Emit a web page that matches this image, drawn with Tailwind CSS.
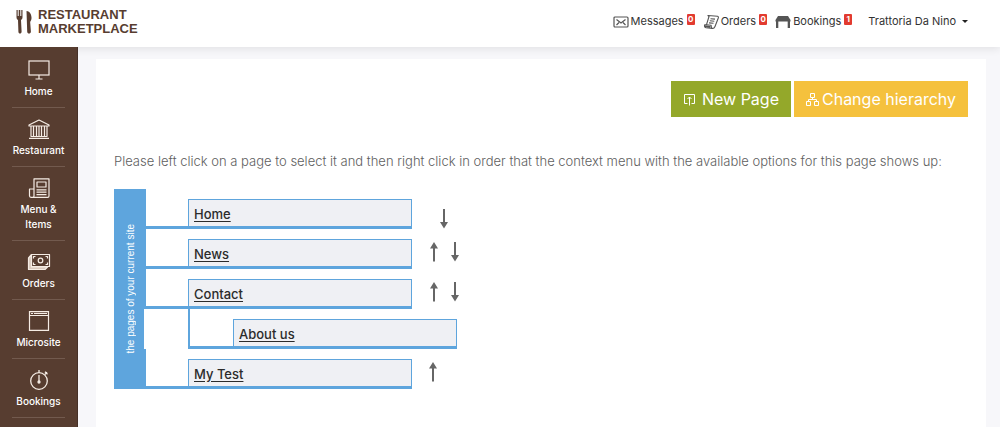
<!DOCTYPE html>
<html lang="en">
<head>
    <meta charset="UTF-8">
    <meta name="viewport" content="width=device-width, initial-scale=1.0">
    <title>Restaurant Marketplace</title>
    <script src="https://cdn.jsdelivr.net/npm/@tailwindcss/browser@4"></script>
</head>
<body class="min-h-screen flex flex-col bg-[#f7f7fa] font-['Inter',sans-serif] text-[#333]">

    <!-- Header -->
    <header class="relative h-[47px] shrink-0 bg-white flex items-center justify-between pl-4 pr-8 pb-1 shadow-[0_2px_8px_rgba(0,0,0,0.09)]">
        <a href="#" class="flex items-center gap-[6px] text-[#573d30]">
            <svg class="w-4 h-6" viewBox="0 0 16 24" fill="currentColor">
                <path d="M.5 0h1.200v6h1V0h1.600v6h1V0h1.200v7c0 1.800-.7 2.600-1.500 3l.6 11.500c0 2.800-3.200 2.800-3.200 0L2 10C1 9.500.5 8.500.5 7z"/>
                <path d="M10.500 1c4 .5 5.200 4.500 5 7.500-.1 2-1.400 2.800-1.300 4l.7 9c0 2.800-3.700 2.800-3.700 0z"/>
            </svg>
            <span class="font-['Liberation_Sans',sans-serif] font-bold text-[13px] leading-[14px]">RESTAURANT<br>MARKETPLACE</span>
        </a>
        <nav class="flex items-center text-[11px]">
            <a href="#" class="flex items-center">
                <svg class="w-4 h-3 mr-[2px]" viewBox="0 0 16 12" fill="none" stroke="#555" stroke-width="1.2">
                    <rect x="1" y="1" width="14" height="10" rx="1"/>
                    <path d="M3.500 3.500L8 7l4.500-3.500M3.500 9L6 6.500M12.500 9L10 6.500"/>
                </svg>
                Messages
                <span class="ml-[3px] mb-1 w-2 h-[11px] bg-[#e23b30] rounded-[1px] text-white text-[8px] leading-[11px] font-bold text-center">0</span>
            </a>
            <a href="#" class="flex items-center ml-2">
                <svg class="w-4 h-4 mr-[2px]" viewBox="0 0 16 16" fill="none" stroke="#555" stroke-width="1.1" stroke-linejoin="round">
                    <path d="M6 2.500L5 1.500l9.500.7c1.200.2 1 1.300.7 2.100L12 12.500c-.6 1.500-1.500 2.200-2.700 2L3 13.800c-1.600-.4-1.700-2-1.300-3.100H3.500z"/>
                    <path d="M3.500 10.700l4.600.6c0 1.400.2 2.600 1.200 3.200M7.500 4.700l4.500.4M6.800 6.800l4.500.4M6 8.900l4.500.4"/>
                    <path d="M2 12.300l5.500.8" stroke-width="2"/>
                </svg>
                Orders
                <span class="ml-[3px] mb-1 w-2 h-[11px] bg-[#e23b30] rounded-[1px] text-white text-[8px] leading-[11px] font-bold text-center">0</span>
            </a>
            <a href="#" class="flex items-center ml-2">
                <svg class="w-4 h-3 mr-[2px]" viewBox="0 0 16 12" fill="#555">
                    <path d="M3 0h10l2.500 4v1.500H.5V4z"/>
                    <path d="M1 5h2.300v7H1zM12.700 5H15v7h-2.300z"/>
                </svg>
                Bookings
                <span class="ml-[3px] mb-1 w-2 h-[11px] bg-[#e23b30] rounded-[1px] text-white text-[8px] leading-[11px] font-bold text-center">1</span>
            </a>
            <button type="button" class="flex items-center ml-4 gap-[6px]">
                Trattoria Da Nino
                <svg class="w-[6px] h-[3px]" viewBox="0 0 6 3" fill="#222"><path d="M0 0h6L3 3z"/></svg>
            </button>
        </nav>
    </header>

    <div class="flex flex-1">

        <!-- Sidebar -->
        <aside class="relative w-[78px] shrink-0 bg-[#573d30] border-r border-[#453027] px-3 pt-[2px] text-white">
            <nav class="text-[10px] leading-[15px] font-medium text-center">
                <a href="#" class="flex flex-col items-center gap-1 pt-[11px] pb-2 border-b border-[#725a4e]">
                    <svg class="w-6 h-5" viewBox="0 0 24 20" fill="none" stroke="#f5ece4" stroke-width="1.200">
                        <rect x="2" y="1" width="20" height="14"/>
                        <path d="M12 15v4M8.500 19h7"/>
                    </svg>
                    Home
                </a>
                <a href="#" class="flex flex-col items-center gap-1 pt-[11px] pb-2 border-b border-[#725a4e]">
                    <svg class="w-6 h-5" viewBox="0 0 24 20" fill="none" stroke="#f5ece4" stroke-width="1.200" stroke-linejoin="round">
                        <path d="M2 6L12 1l10 5v1H2zM3.500 17.500h17M2 19.300h20M4 7v10M6.500 7v10M9.500 7v10M12 7v10M14.500 7v10M17.500 7v10M20 7v10"/>
                    </svg>
                    Restaurant
                </a>
                <a href="#" class="flex flex-col items-center gap-1 pt-[11px] pb-2 border-b border-[#725a4e]">
                    <svg class="w-6 h-5" viewBox="0 0 24 20" fill="none" stroke="#f5ece4" stroke-width="1.200" stroke-linejoin="round">
                        <path d="M7 .8h15V18c0 .8-.5 1.300-1.300 1.300H4c-1 0-1.500-.6-1.500-1.500V11H7zM7 11v7c0 .8-.6 1.300-1.300 1.300"/>
                        <rect x="10" y="4" width="9" height="5"/>
                        <path d="M9.500 11.800h10M9.500 14.200h10M9.500 16.600h10"/>
                    </svg>
                    <span>Menu &amp;<br>Items</span>
                </a>
                <a href="#" class="flex flex-col items-center gap-1 pt-[11px] pb-2 border-b border-[#725a4e]">
                    <svg class="w-6 h-5" viewBox="0 0 24 20" fill="none" stroke="#f5ece4" stroke-width="1.200" stroke-linejoin="round">
                        <path d="M4.500 2.500L1.500 6v11.500h16.500l2.500-2.500H4.500z" fill="#d9c9bd"/>
                        <rect x="4.500" y="2.500" width="18" height="12" fill="#573d30"/>
                        <circle cx="13.500" cy="8.500" r="2.300"/>
                        <path d="M6.500 6.500v-2h2M18.500 4.500h2v2M6.500 10.500v2h2M18.500 12.500h2v-2"/>
                    </svg>
                    Orders
                </a>
                <a href="#" class="flex flex-col items-center gap-1 pt-[11px] pb-2 border-b border-[#725a4e]">
                    <svg class="w-6 h-5" viewBox="0 0 24 20" fill="none" stroke="#f5ece4" stroke-width="1.200">
                        <path d="M2.500.6h19v18.800h-19zM2.500 4.500h19"/>
                        <path d="M4 2.500h2M7 2.500h13"/>
                    </svg>
                    Microsite
                </a>
                <a href="#" class="flex flex-col items-center gap-1 pt-[11px] pb-2 border-b border-[#725a4e]">
                    <svg class="w-6 h-5" viewBox="0 0 24 20" fill="none" stroke="#f5ece4" stroke-width="1.300">
                        <circle cx="12" cy="11" r="8.300"/>
                        <path d="M12 0v2.500M17.800 4.500L20 2.300M18 1.800l2.500 2.500M12 5v6"/>
                        <circle cx="12" cy="12" r="1" fill="#f5ece4"/>
                    </svg>
                    Bookings
                </a>
            </nav>
        </aside>

        <!-- Page content -->
        <main class="flex-1 pl-[18px] pr-[14px] pt-3 flex">
            <section class="flex-1 bg-white px-[18px] pt-[22px]">
                <div class="flex justify-end gap-[3px] text-white text-base">
                    <button type="button" class="h-9 bg-[#94a82a] px-3 flex items-center gap-[6px]">
                        <svg class="w-[13px] h-[13px]" viewBox="0 0 13 13" fill="none" stroke="currentColor" stroke-width="1">
                            <path d="M4.500 10.500H1.500v-9h10v9h-3M6.500 12.500V4M4.500 6l2-2 2 2"/>
                        </svg>
                        New Page
                    </button>
                    <button type="button" class="h-9 bg-[#f5c13d] px-3 flex items-center gap-[3px]">
                        <svg class="w-[13px] h-[13px]" viewBox="0 0 13 13" fill="none" stroke="currentColor" stroke-width="1">
                            <path d="M4.500.5h4v4h-4zM.5 8.500h4v4h-4zM8.500 8.500h4v4h-4zM6.500 4.500v2M2.500 8.500v-2h8v2"/>
                        </svg>
                        Change hierarchy
                    </button>
                </div>

                <p class="mt-[34px] text-[13px] leading-5 font-light text-[#606060]">Please left click on a page to select it and then right click in order that the context menu with the available options for this page shows up:</p>

                <!-- Site tree -->
                <div class="mt-[18px] flex text-[13px] font-medium text-[#2b2b2b]">
                    <div class="w-8 shrink-0 bg-[#5ea5dd] flex items-center justify-center">
                        <span class="[writing-mode:vertical-rl] rotate-180 font-['Liberation_Sans',sans-serif] font-normal text-[10px] text-white whitespace-nowrap">the pages of your current site</span>
                    </div>
                    <ul>
                        <li class="flex h-10 items-end">
                            <span class="w-[42px] border-b-3 border-[#5ea5dd]"></span>
                            <a href="#" class="w-56 h-[30px] px-[5px] pt-[3px] bg-[#eff0f4] border border-b-3 border-[#5ea5dd] underline underline-offset-2 flex items-center">Home</a>
                            <span class="w-16 flex justify-center">
                                <button type="button" aria-label="Move Home down"><svg class="w-2 h-5" viewBox="0 0 8 20" fill="#666"><path d="M3 0h2v13h3L4 19.500 0 13h3z"/></svg></button>
                            </span>
                        </li>
                        <li class="flex h-10 items-end">
                            <span class="w-[42px] border-b-3 border-[#5ea5dd]"></span>
                            <a href="#" class="w-56 h-[30px] px-[5px] pt-[3px] bg-[#eff0f4] border border-b-3 border-[#5ea5dd] underline underline-offset-2 flex items-center">News</a>
                            <span class="w-16 pb-[7px] flex justify-center gap-[13px]">
                                <button type="button" aria-label="Move News up"><svg class="w-2 h-5" viewBox="0 0 8 20" fill="#666"><path d="M3 19.500h2v-13h3L4 0 0 6.500h3z"/></svg></button>
                                <button type="button" aria-label="Move News down"><svg class="w-2 h-5" viewBox="0 0 8 20" fill="#666"><path d="M3 0h2v13h3L4 19.500 0 13h3z"/></svg></button>
                            </span>
                        </li>
                        <li>
                            <div class="flex h-10 items-end">
                                <span class="w-[42px] border-b-3 border-[#5ea5dd]"></span>
                                <a href="#" class="w-56 h-[30px] px-[5px] pt-[3px] bg-[#eff0f4] border border-b-3 border-[#5ea5dd] underline underline-offset-2 flex items-center">Contact</a>
                                <span class="w-16 pb-[7px] flex justify-center gap-[13px]">
                                    <button type="button" aria-label="Move Contact up"><svg class="w-2 h-5" viewBox="0 0 8 20" fill="#666"><path d="M3 19.500h2v-13h3L4 0 0 6.500h3z"/></svg></button>
                                    <button type="button" aria-label="Move Contact down"><svg class="w-2 h-5" viewBox="0 0 8 20" fill="#666"><path d="M3 0h2v13h3L4 19.500 0 13h3z"/></svg></button>
                                </span>
                            </div>
                            <ul class="-ml-[2px] pl-11 bg-white">
                                <li class="flex h-10 items-end">
                                    <span class="w-[45px] h-full border-l-2 border-b-3 border-[#5ea5dd]"></span>
                                    <a href="#" class="w-56 h-[30px] px-[5px] pt-[3px] bg-[#eff0f4] border border-b-3 border-[#5ea5dd] underline underline-offset-2 flex items-center">About us</a>
                                </li>
                            </ul>
                        </li>
                        <li class="flex h-10 items-end">
                            <span class="w-[42px] border-b-3 border-[#5ea5dd]"></span>
                            <a href="#" class="w-56 h-[30px] px-[5px] pt-[3px] bg-[#eff0f4] border border-b-3 border-[#5ea5dd] underline underline-offset-2 flex items-center">My Test</a>
                            <span class="pl-[17px] pb-[7px] flex">
                                <button type="button" aria-label="Move My Test up"><svg class="w-2 h-5" viewBox="0 0 8 20" fill="#666"><path d="M3 19.500h2v-13h3L4 0 0 6.500h3z"/></svg></button>
                            </span>
                        </li>
                    </ul>
                </div>
            </section>
        </main>
    </div>

</body>
</html>
